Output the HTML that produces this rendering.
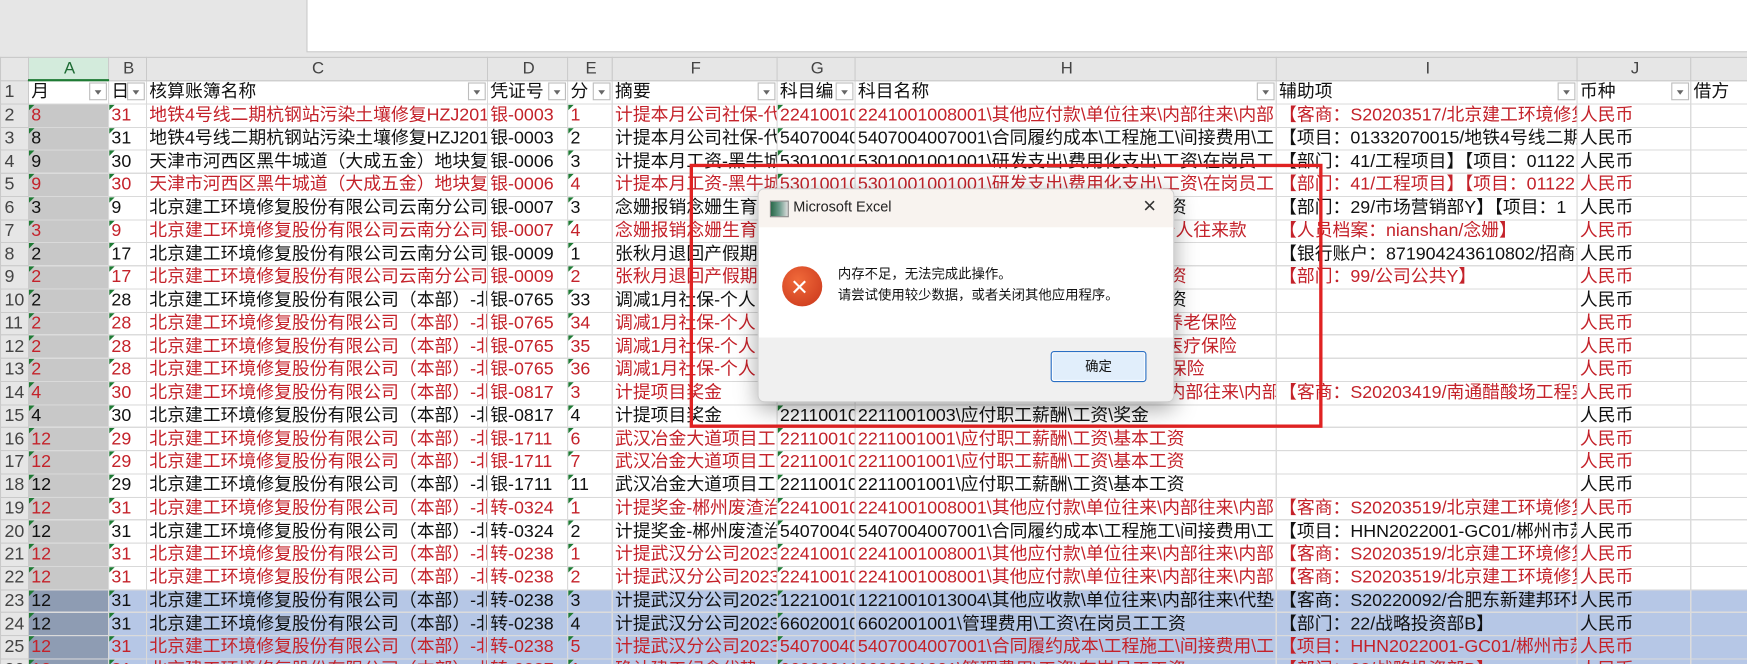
<!DOCTYPE html>
<html><head><meta charset="utf-8">
<style>
html,body{margin:0;padding:0;width:1747px;height:664px;overflow:hidden;background:#e6e6e6}
#w{position:absolute;left:0;top:0;width:1568px;height:596px;transform:scale(1.11416);transform-origin:0 0;font-family:"Liberation Sans","Noto Sans CJK SC",sans-serif;background:#e6e6e6;overflow:hidden}
#fb{position:absolute;left:275px;top:-1px;width:1300px;height:46px;background:#fff;border:1px solid #c8c8c8}
table{position:absolute;left:0;top:51px;border-collapse:collapse;table-layout:fixed;width:1600px}
td{height:19.75px;padding:0 0 0 2px;border:1px solid #d9d9d9;white-space:nowrap;overflow:hidden;font-size:16px;line-height:19px;background:#fff;color:#111;position:relative}
tr.h td{height:19px;background:#e6e6e6;color:#444;text-align:center;font-size:15px;border-color:#c9c9c9}
td.n{background:#e6e6e6;color:#444;text-align:left;padding-left:3px;border-color:#c9c9c9}
tr.r td{color:#c4222a}
tr.r td.n{color:#444}
td.a{background:#c8c8c8}
tr.s td{background:#b6c7e6}
tr.s td.a{background:#8e9cb3}
tr.s td.n{background:#e6e6e6}
td.k{text-align:right;padding-right:2px}
.f{position:absolute;right:1px;top:1px;width:16px;height:16px;border:1px solid #bdbdbd;background:#fff;box-sizing:border-box}
.f:after{content:"";position:absolute;left:4px;top:6px;border-left:3px solid transparent;border-right:3px solid transparent;border-top:4px solid #666}
.g:before{content:"";position:absolute;left:0;top:0;border-top:5px solid #1e7b34;border-right:5px solid transparent}
#dlg{position:absolute;left:680px;top:169px;width:372px;height:190px;background:#fff;border:1px solid #cfcfcf;border-radius:6px;box-shadow:0 6px 20px rgba(0,0,0,.35);overflow:hidden;font-family:"Liberation Sans","Noto Sans CJK SC",sans-serif}
#tb{height:34px;background:#f8f3ef;position:relative}
#ft{position:absolute;left:0;right:0;bottom:0;height:57px;background:#f0f0f0}
#red{position:absolute;left:619px;top:147px;width:562px;height:231px;border:3px solid #e02222}
</style></head><body><div id="w">
<div id="fb"></div>
<table>
<colgroup><col style="width:25px"><col style="width:72px"><col style="width:34px"><col style="width:306px"><col style="width:72px"><col style="width:40px"><col style="width:148px"><col style="width:70px"><col style="width:378px"><col style="width:270px"><col style="width:102px"><col style="width:83px"></colgroup>
<tr class="h"><td></td><td style="background:#d3ebdc;color:#1e6b34;border-bottom:2px solid #1e7b34">A</td><td>B</td><td>C</td><td>D</td><td>E</td><td>F</td><td>G</td><td>H</td><td>I</td><td>J</td><td></td></tr>
<tr><td class="n">1</td><td>月<span class="f"></span></td><td>日<span class="f"></span></td><td>核算账簿名称<span class="f"></span></td><td>凭证号<span class="f"></span></td><td>分<span class="f"></span></td><td>摘要<span class="f"></span></td><td>科目编<span class="f"></span></td><td>科目名称<span class="f"></span></td><td>辅助项<span class="f"></span></td><td>币种<span class="f"></span></td><td>借方</td></tr>
<tr class="r"><td class="n">2</td><td class="a g">8</td><td class="g">31</td><td>地铁4号线二期杭钢站污染土壤修复HZJ2018</td><td>银-0003</td><td class="g">1</td><td>计提本月公司社保-代扣</td><td class="g">22410010(</td><td>2241001008001\其他应付款\单位往来\内部往来\内部</td><td>【客商：S20203517/北京建工环境修复</td><td>人民币</td><td class="k"></td></tr>
<tr><td class="n">3</td><td class="a g">8</td><td class="g">31</td><td>地铁4号线二期杭钢站污染土壤修复HZJ2018</td><td>银-0003</td><td class="g">2</td><td>计提本月公司社保-代扣</td><td class="g">54070040(</td><td>5407004007001\合同履约成本\工程施工\间接费用\工</td><td>【项目：01332070015/地铁4号线二期杭</td><td>人民币</td><td class="k"></td></tr>
<tr><td class="n">4</td><td class="a g">9</td><td class="g">30</td><td>天津市河西区黑牛城道（大成五金）地块复</td><td>银-0006</td><td class="g">3</td><td>计提本月工资-黑牛城</td><td class="g">53010010(</td><td>5301001001001\研发支出\费用化支出\工资\在岗员工</td><td>【部门：41/工程项目】【项目：01122</td><td>人民币</td><td class="k">1</td></tr>
<tr class="r"><td class="n">5</td><td class="a g">9</td><td class="g">30</td><td>天津市河西区黑牛城道（大成五金）地块复</td><td>银-0006</td><td class="g">4</td><td>计提本月工资-黑牛城</td><td class="g">53010010(</td><td>5301001001001\研发支出\费用化支出\工资\在岗员工</td><td>【部门：41/工程项目】【项目：01122</td><td>人民币</td><td class="k"></td></tr>
<tr><td class="n">6</td><td class="a g">3</td><td class="g">9</td><td>北京建工环境修复股份有限公司云南分公司</td><td>银-0007</td><td class="g">3</td><td>念姗报销念姗生育津贴</td><td class="g"></td><td style="padding-left:281px">资</td><td>【部门：29/市场营销部Y】【项目：1</td><td>人民币</td><td class="k">-4</td></tr>
<tr class="r"><td class="n">7</td><td class="a g">3</td><td class="g">9</td><td>北京建工环境修复股份有限公司云南分公司</td><td>银-0007</td><td class="g">4</td><td>念姗报销念姗生育津贴</td><td class="g"></td><td style="padding-left:271px">个人往来款</td><td>【人员档案：nianshan/念姗】</td><td>人民币</td><td class="k">4</td></tr>
<tr><td class="n">8</td><td class="a g">2</td><td class="g">17</td><td>北京建工环境修复股份有限公司云南分公司</td><td>银-0009</td><td class="g">1</td><td>张秋月退回产假期间</td><td class="g"></td><td></td><td>【银行账户：871904243610802/招商银</td><td>人民币</td><td class="k"></td></tr>
<tr class="r"><td class="n">9</td><td class="a g">2</td><td class="g">17</td><td>北京建工环境修复股份有限公司云南分公司</td><td>银-0009</td><td class="g">2</td><td>张秋月退回产假期间</td><td class="g"></td><td style="padding-left:281px">资</td><td>【部门：99/公司公共Y】</td><td>人民币</td><td class="k">-4</td></tr>
<tr><td class="n">10</td><td class="a g">2</td><td class="g">28</td><td>北京建工环境修复股份有限公司（本部）-北</td><td>银-0765</td><td class="g">33</td><td>调减1月社保-个人</td><td class="g"></td><td style="padding-left:281px">资</td><td></td><td>人民币</td><td class="k"></td></tr>
<tr class="r"><td class="n">11</td><td class="a g">2</td><td class="g">28</td><td>北京建工环境修复股份有限公司（本部）-北</td><td>银-0765</td><td class="g">34</td><td>调减1月社保-个人</td><td class="g"></td><td style="padding-left:278px">养老保险</td><td></td><td>人民币</td><td class="k"></td></tr>
<tr class="r"><td class="n">12</td><td class="a g">2</td><td class="g">28</td><td>北京建工环境修复股份有限公司（本部）-北</td><td>银-0765</td><td class="g">35</td><td>调减1月社保-个人</td><td class="g"></td><td style="padding-left:278px">医疗保险</td><td></td><td>人民币</td><td class="k"></td></tr>
<tr class="r"><td class="n">13</td><td class="a g">2</td><td class="g">28</td><td>北京建工环境修复股份有限公司（本部）-北</td><td>银-0765</td><td class="g">36</td><td>调减1月社保-个人</td><td class="g"></td><td style="padding-left:281px">保险</td><td></td><td>人民币</td><td class="k"></td></tr>
<tr class="r"><td class="n">14</td><td class="a g">4</td><td class="g">30</td><td>北京建工环境修复股份有限公司（本部）-北</td><td>银-0817</td><td class="g">3</td><td>计提项目奖金</td><td class="g"></td><td style="padding-left:280px">内部往来\内部</td><td>【客商：S20203419/南通醋酸场工程实</td><td>人民币</td><td class="k">3</td></tr>
<tr><td class="n">15</td><td class="a g">4</td><td class="g">30</td><td>北京建工环境修复股份有限公司（本部）-北</td><td>银-0817</td><td class="g">4</td><td>计提项目奖金</td><td class="g">22110010(</td><td>2211001003\应付职工薪酬\工资\奖金</td><td></td><td>人民币</td><td class="k"></td></tr>
<tr class="r"><td class="n">16</td><td class="a g">12</td><td class="g">29</td><td>北京建工环境修复股份有限公司（本部）-北</td><td>银-1711</td><td class="g">6</td><td>武汉冶金大道项目工资</td><td class="g">22110010(</td><td>2211001001\应付职工薪酬\工资\基本工资</td><td></td><td>人民币</td><td class="k">6</td></tr>
<tr class="r"><td class="n">17</td><td class="a g">12</td><td class="g">29</td><td>北京建工环境修复股份有限公司（本部）-北</td><td>银-1711</td><td class="g">7</td><td>武汉冶金大道项目工资</td><td class="g">22110010(</td><td>2211001001\应付职工薪酬\工资\基本工资</td><td></td><td>人民币</td><td class="k">6</td></tr>
<tr><td class="n">18</td><td class="a g">12</td><td class="g">29</td><td>北京建工环境修复股份有限公司（本部）-北</td><td>银-1711</td><td class="g">11</td><td>武汉冶金大道项目工资</td><td class="g">22110010(</td><td>2211001001\应付职工薪酬\工资\基本工资</td><td></td><td>人民币</td><td class="k"></td></tr>
<tr class="r"><td class="n">19</td><td class="a g">12</td><td class="g">31</td><td>北京建工环境修复股份有限公司（本部）-北</td><td>转-0324</td><td class="g">1</td><td>计提奖金-郴州废渣治理</td><td class="g">22410010(</td><td>2241001008001\其他应付款\单位往来\内部往来\内部</td><td>【客商：S20203519/北京建工环境修复</td><td>人民币</td><td class="k"></td></tr>
<tr><td class="n">20</td><td class="a g">12</td><td class="g">31</td><td>北京建工环境修复股份有限公司（本部）-北</td><td>转-0324</td><td class="g">2</td><td>计提奖金-郴州废渣治理</td><td class="g">54070040(</td><td>5407004007001\合同履约成本\工程施工\间接费用\工</td><td>【项目：HHN2022001-GC01/郴州市苏</td><td>人民币</td><td class="k">2</td></tr>
<tr class="r"><td class="n">21</td><td class="a g">12</td><td class="g">31</td><td>北京建工环境修复股份有限公司（本部）-北</td><td>转-0238</td><td class="g">1</td><td>计提武汉分公司2023</td><td class="g">22410010(</td><td>2241001008001\其他应付款\单位往来\内部往来\内部</td><td>【客商：S20203519/北京建工环境修复</td><td>人民币</td><td class="k"></td></tr>
<tr class="r"><td class="n">22</td><td class="a g">12</td><td class="g">31</td><td>北京建工环境修复股份有限公司（本部）-北</td><td>转-0238</td><td class="g">2</td><td>计提武汉分公司2023</td><td class="g">22410010(</td><td>2241001008001\其他应付款\单位往来\内部往来\内部</td><td>【客商：S20203519/北京建工环境修复</td><td>人民币</td><td class="k"></td></tr>
<tr class="s"><td class="n">23</td><td class="a g">12</td><td class="g">31</td><td>北京建工环境修复股份有限公司（本部）-北</td><td>转-0238</td><td class="g">3</td><td>计提武汉分公司2023</td><td class="g">12210010(</td><td>1221001013004\其他应收款\单位往来\内部往来\代垫</td><td>【客商：S20220092/合肥东新建邦环境</td><td>人民币</td><td class="k">1</td></tr>
<tr class="s"><td class="n">24</td><td class="a g">12</td><td class="g">31</td><td>北京建工环境修复股份有限公司（本部）-北</td><td>转-0238</td><td class="g">4</td><td>计提武汉分公司2023</td><td class="g">66020010(</td><td>6602001001\管理费用\工资\在岗员工工资</td><td>【部门：22/战略投资部B】</td><td>人民币</td><td class="k"></td></tr>
<tr class="s r"><td class="n">25</td><td class="a g">12</td><td class="g">31</td><td>北京建工环境修复股份有限公司（本部）-北</td><td>转-0238</td><td class="g">5</td><td>计提武汉分公司2023</td><td class="g">54070040(</td><td>5407004007001\合同履约成本\工程施工\间接费用\工</td><td>【项目：HHN2022001-GC01/郴州市苏</td><td>人民币</td><td class="k">6</td></tr>
<tr class="s r"><td class="n">26</td><td class="a g">12</td><td class="g">31</td><td>北京建工环境修复股份有限公司（本部）-北</td><td>转-0237</td><td class="g">1</td><td>确认建工纪念代垫</td><td class="g">66020010(</td><td>6602001001\管理费用\工资\在岗员工工资</td><td>【部门：22/战略投资部B】</td><td>人民币</td><td class="k"></td></tr>
</table>
<div id="red"></div>
<div id="dlg">
 <div id="tb">
  <div style="position:absolute;left:10px;top:10px;width:15px;height:13px;border:1px solid #888;background:linear-gradient(90deg,#2a6a4a 0,#6a9a8a 50%,#ddd 100%)"></div>
  <div style="position:absolute;left:31px;top:8px;font-size:13px;color:#222">Microsoft Excel</div>
  <div style="position:absolute;left:345px;top:4px;font-size:20px;color:#333;font-weight:300">×</div>
 </div>
 <div style="position:absolute;left:21px;top:69px;width:36px;height:36px;border-radius:50%;background:radial-gradient(circle at 40% 35%,#f06a3a,#c8341a)"></div>
 <div style="position:absolute;left:29px;top:73px;color:#fff;font-size:26px;line-height:28px;font-weight:300">×</div>
 <div style="position:absolute;left:71px;top:67px;font-size:12px;line-height:19px;color:#111">内存不足，无法完成此操作。<br>请尝试使用较少数据，或者关闭其他应用程序。</div>
 <div id="ft">
  <div style="position:absolute;left:262px;top:12px;width:84px;height:26px;border:1px solid #2a6fc4;border-radius:3px;background:#e1eefb;box-shadow:inset 0 0 0 1px #fff;font-size:12px;line-height:26px;text-align:center;color:#111">确定</div>
 </div>
</div>
</div></body></html>
